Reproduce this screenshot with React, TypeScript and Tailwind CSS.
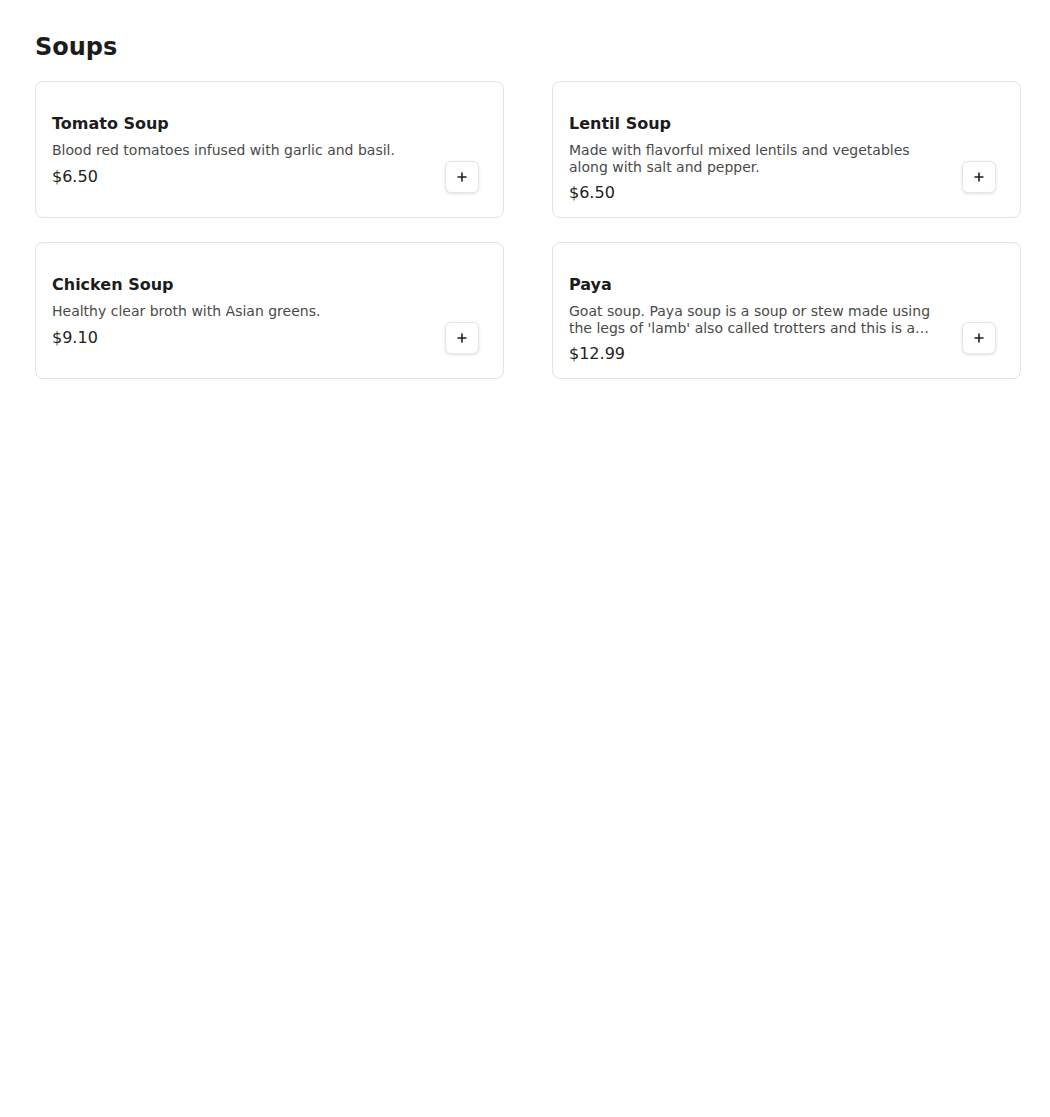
import React from 'react'

interface Soup {
  name: string
  description: string
  price: string
}

const SOUPS: Soup[] = [
  { name: 'Tomato Soup', description: 'Blood red tomatoes infused with garlic and basil.', price: '$6.50' },
  { name: 'Lentil Soup', description: 'Made with flavorful mixed lentils and vegetables along with salt and pepper.', price: '$6.50' },
  { name: 'Chicken Soup', description: 'Healthy clear broth with Asian greens.', price: '$9.10' },
  {
    name: 'Paya',
    description:
      "Goat soup. Paya soup is a soup or stew made using the legs of 'lamb' also called trotters and this is a traditional dish.",
    price: '$12.99',
  },
]

function PlusIcon() {
  return (
    <svg width="12" height="12" viewBox="0 0 12 12" fill="none" stroke="#1f1f1f" strokeWidth="1.6">
      <path d="M6 1.5v9M1.5 6h9" />
    </svg>
  )
}

export default function App() {
  return (
    <div className="min-h-screen bg-white pl-[35px] pr-[29px] pt-[31px] font-['DejaVu_Sans',sans-serif] text-[#1c1c1c]">
      <h1 className="mb-[18px] text-2xl font-bold leading-8">Soups</h1>
      <div className="grid grid-cols-2 gap-x-12 gap-y-6">
        {SOUPS.map(s => (
          <div
            key={s.name}
            className="flex h-[137px] items-start gap-7 rounded-lg border border-[#e3e3e3] bg-white pl-4 pr-6 pt-[30px]"
          >
            <div className="min-w-0 flex-1">
              <p className="text-base font-bold leading-6">{s.name}</p>
              <p className="mt-1.5 line-clamp-2 text-sm leading-[16.5px] text-[#4a4a4a]">{s.description}</p>
              <p className="mt-1.5 text-base leading-6 text-[#222]">{s.price}</p>
            </div>
            <button className="mt-[49px] flex h-[32px] w-[34px] shrink-0 items-center justify-center rounded-md border border-[#e6e6e6] bg-white shadow-[0_1px_3px_rgba(0,0,0,0.12)]">
              <PlusIcon />
            </button>
          </div>
        ))}
      </div>
    </div>
  )
}
